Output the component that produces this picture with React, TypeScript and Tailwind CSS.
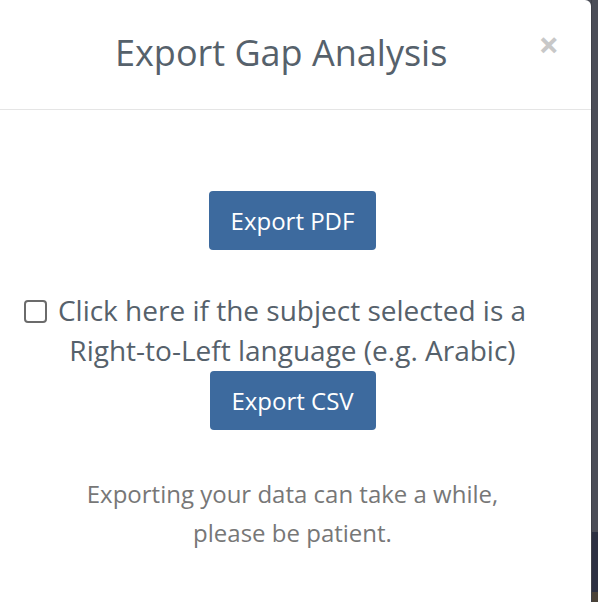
export default function App() {
  return (
    <div className="flex h-[602px] w-[598px] overflow-hidden bg-[#4b4d57] font-['Open_Sans',sans-serif]">
      {/* Modal */}
      <div className="flex h-full w-[591px] flex-col rounded-tr-[6px] bg-white">
        {/* Header */}
        <div className="flex h-[110px] items-center border-b border-[#e5e5e5] pl-[24px] pr-[32px]">
          <h1 className="-mt-[4px] flex-1 text-center text-[36px] font-normal text-[#56616b]">Export Gap Analysis</h1>
          <span className="-mt-[20px] text-[36px] font-bold leading-none text-[#c8c8c8]">×</span>
        </div>

        {/* Body */}
        <div className="flex flex-col items-center pr-[6px] pt-[81px]">
          <button className="h-[59px] w-[167px] rounded-[4px] bg-[#3d6a9e] text-[24px] text-white">Export PDF</button>

          <label className="mt-[40px] block text-center text-[28px] leading-[40px] text-[#56616b]">
            <span className="mr-[35px]">
              <span className="mr-[11px] inline-block h-[23px] w-[23px] rounded-[4px] border-2 border-[#6b6b6b] align-[-2px]" />
              Click here if the subject selected is a
            </span>
            <br />
            Right-to-Left language (e.g. Arabic)
          </label>

          <button className="mt-[1px] h-[59px] w-[166px] rounded-[4px] bg-[#3d6a9e] text-[24px] text-white">Export CSV</button>

          <p className="mt-[44px] text-center text-[24px] leading-[39px] text-[#777777]">
            Exporting your data can take a while,
            <br />
            please be patient.
          </p>
        </div>
      </div>

      {/* Backdrop strip */}
      <div className="flex h-full flex-1 flex-col border-l border-[#3e4049]">
        <div className="h-[532px] bg-[#4b4d57]" />
        <div className="h-[60px] bg-[#2c3042]" />
        <div className="flex-1 bg-[#4a4238]" />
      </div>
    </div>
  );
}
